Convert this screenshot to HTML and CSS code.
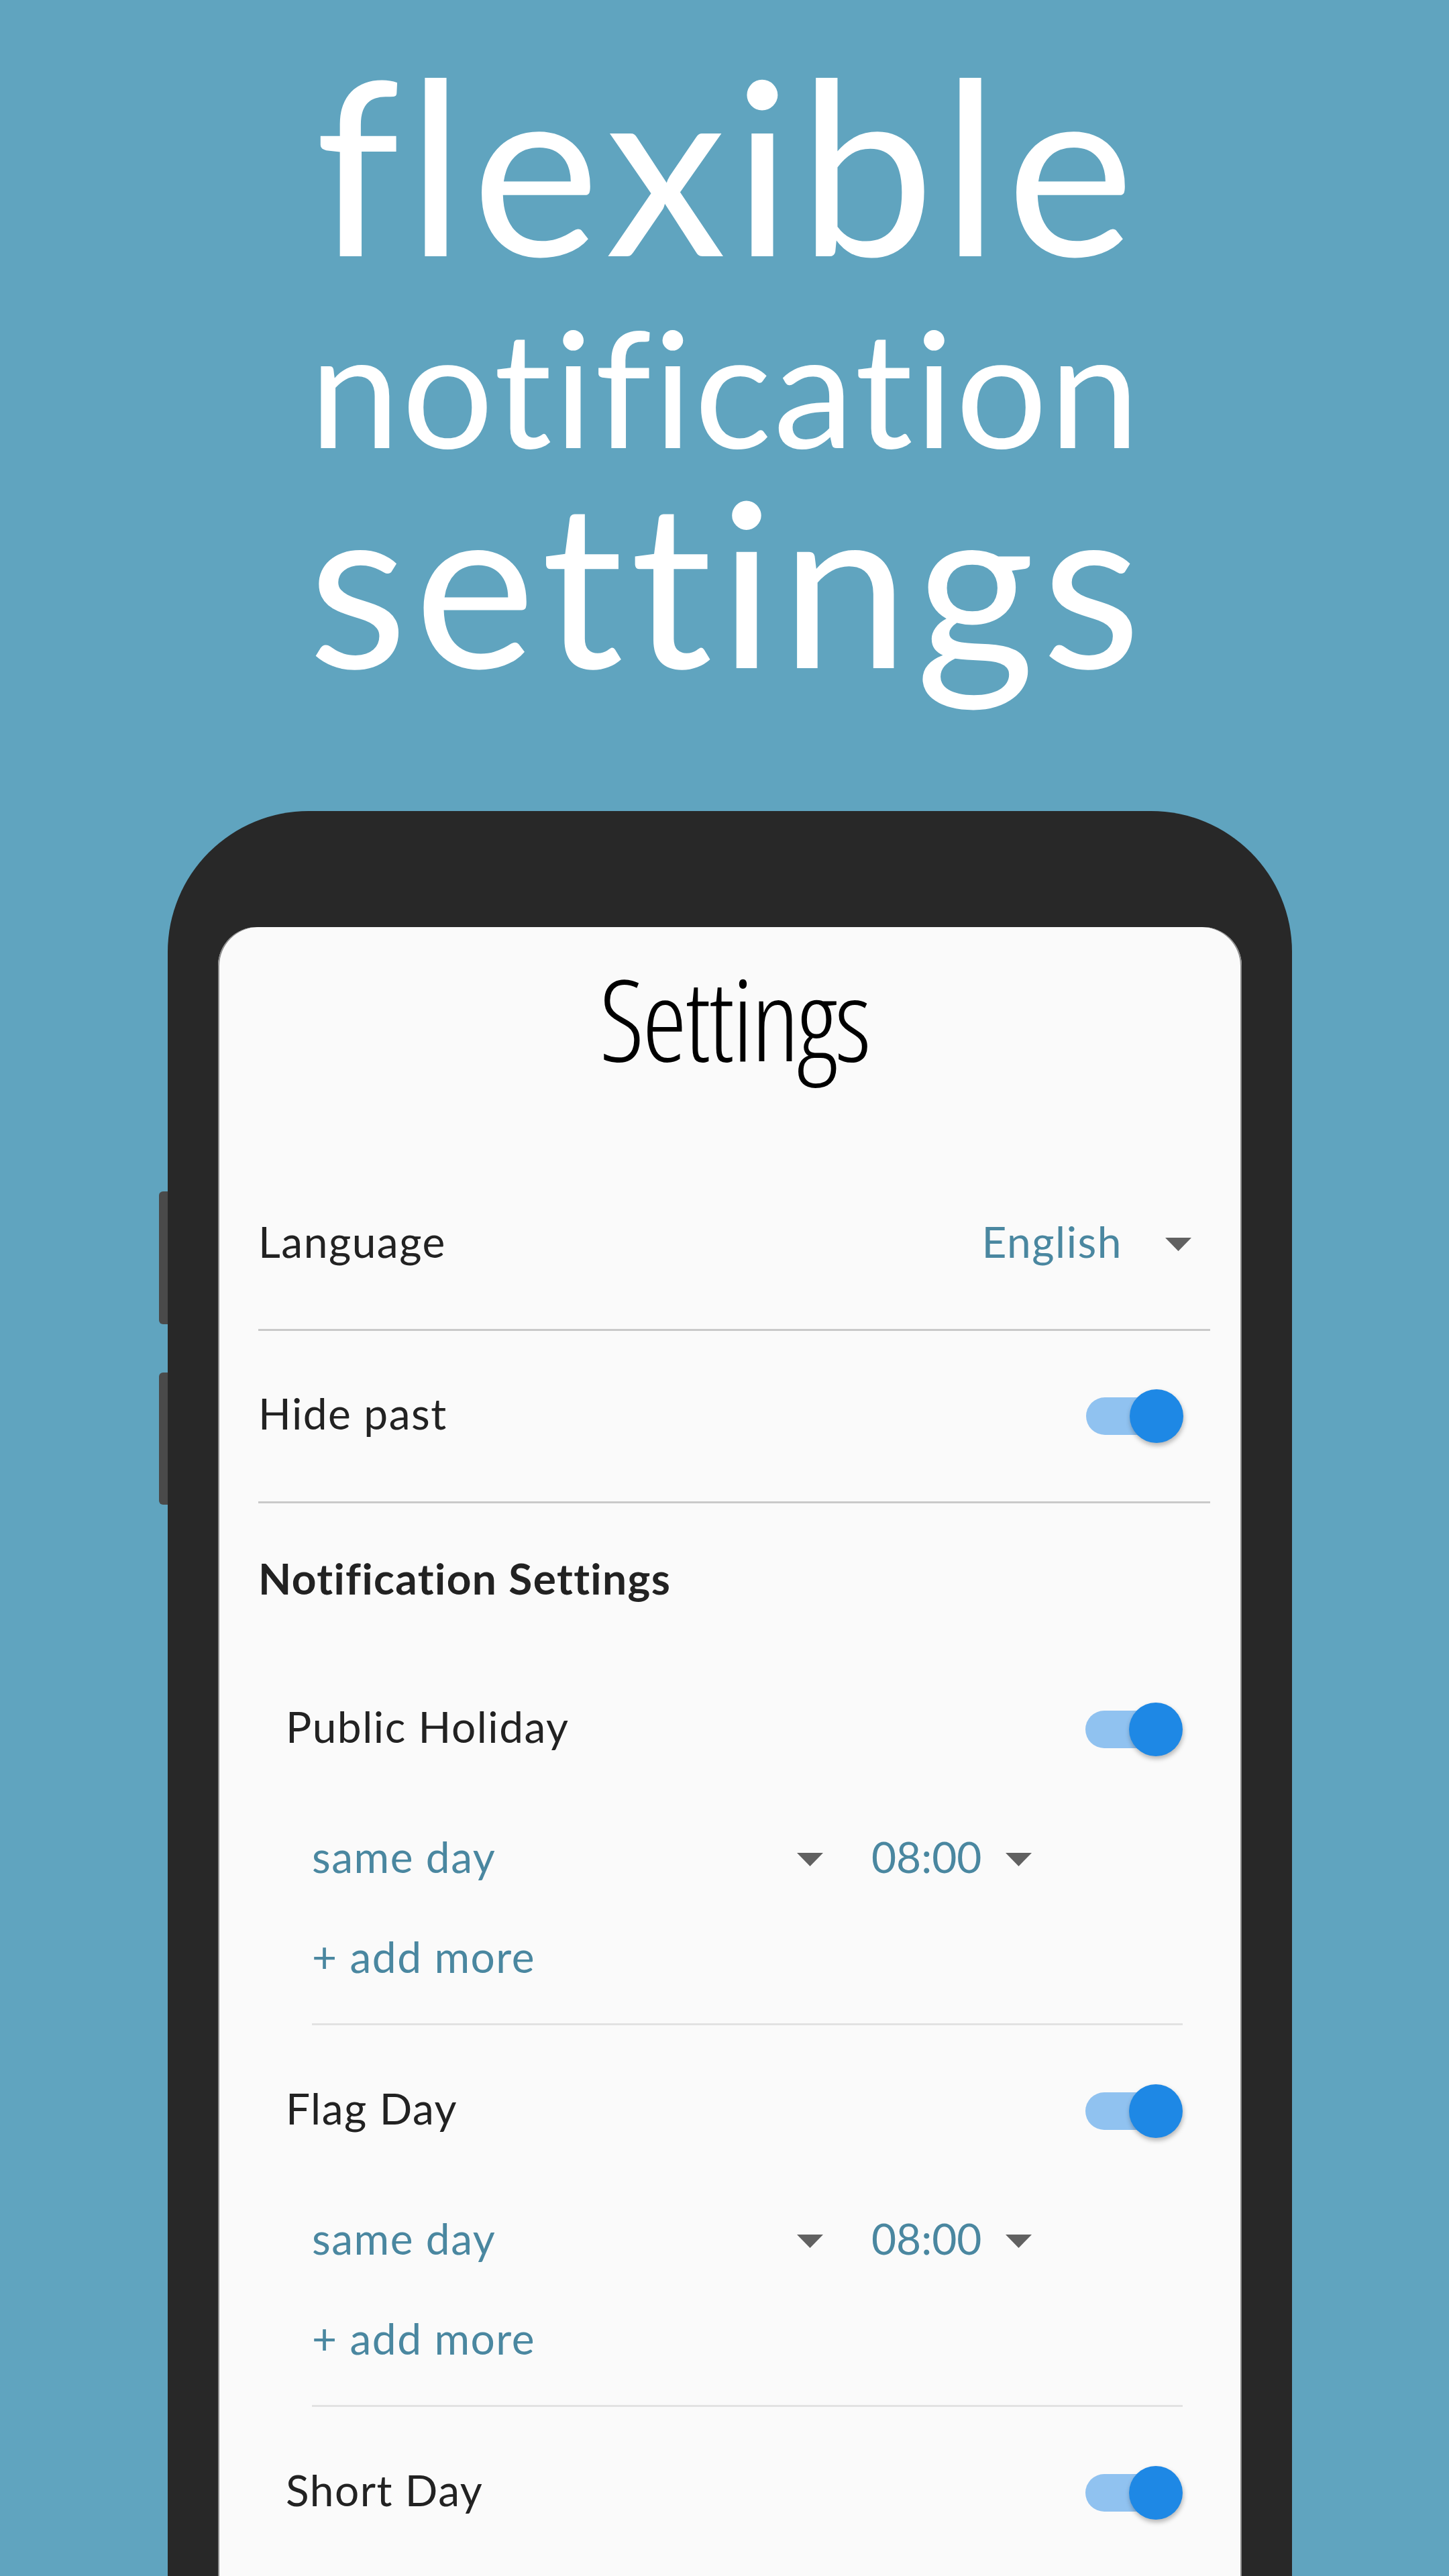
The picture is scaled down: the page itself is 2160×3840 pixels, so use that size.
FILE: index.html
```html
<!DOCTYPE html>
<html lang="en">
<head>
<meta charset="utf-8">
<title>flexible notification settings</title>
<link rel="stylesheet" href="styles.css">
</head>
<body>
<header class="headline">
  <div class="headline-line line-1">flexible</div>
  <div class="headline-line line-2">notification</div>
  <div class="headline-line line-3">settings</div>
</header>

<div class="phone">
  <span class="side-btn side-btn-1"></span>
  <span class="side-btn side-btn-2"></span>
  <main class="screen">
    <h1 class="screen-title">Settings</h1>
    <div class="list">
      <div class="row row-lang">
        <span class="label">Language</span>
        <span class="select">
          <span class="value">English</span>
          <svg class="caret caret-lang" width="39" height="20" viewBox="0 0 39 20"><path d="M0 0H39L19.5 20Z"/></svg>
        </span>
      </div>
      <div class="divider"></div>
      <div class="row row-hide">
        <span class="label">Hide past</span>
        <span class="switch"><span class="track"></span><span class="thumb"></span></span>
      </div>
      <div class="divider"></div>
      <div class="section-title">Notification Settings</div>

      <section class="group">
        <div class="row group-title">
          <span class="label">Public Holiday</span>
          <span class="switch"><span class="track"></span><span class="thumb"></span></span>
        </div>
        <div class="sub-row">
          <span class="dd dd-day">
            <span class="value">same day</span>
            <svg class="caret" width="39" height="20" viewBox="0 0 39 20"><path d="M0 0H39L19.5 20Z"/></svg>
          </span>
          <span class="dd dd-time">
            <span class="value value-time">08:00</span>
            <svg class="caret" width="39" height="20" viewBox="0 0 39 20"><path d="M0 0H39L19.5 20Z"/></svg>
          </span>
        </div>
        <div class="add-row"><span class="value">+ add more</span></div>
        <div class="divider divider-light"></div>
      </section>

      <section class="group">
        <div class="row group-title">
          <span class="label">Flag Day</span>
          <span class="switch"><span class="track"></span><span class="thumb"></span></span>
        </div>
        <div class="sub-row">
          <span class="dd dd-day">
            <span class="value">same day</span>
            <svg class="caret" width="39" height="20" viewBox="0 0 39 20"><path d="M0 0H39L19.5 20Z"/></svg>
          </span>
          <span class="dd dd-time">
            <span class="value value-time">08:00</span>
            <svg class="caret" width="39" height="20" viewBox="0 0 39 20"><path d="M0 0H39L19.5 20Z"/></svg>
          </span>
        </div>
        <div class="add-row"><span class="value">+ add more</span></div>
        <div class="divider divider-light"></div>
      </section>

      <section class="group">
        <div class="row group-title">
          <span class="label">Short Day</span>
          <span class="switch"><span class="track"></span><span class="thumb"></span></span>
        </div>
      </section>
    </div>
  </main>
</div>
</body>
</html>
```

FILE: styles.css
```css
html, body {
  margin: 0;
  padding: 0;
}

body {
  width: 2160px;
  height: 3840px;
  overflow: hidden;
  background: #60a4bf;
  font-family: Lato, "Noto Sans", sans-serif;
  font-variant-ligatures: none;
}

/* ---------- headline ---------- */
.headline {
  padding-top: 93px;
  text-align: center;
  color: #ffffff;
  font-family: Lato, "Noto Sans", sans-serif;
  font-weight: 400;
  font-variant-ligatures: none;
}

.headline-line {
  white-space: nowrap;
}

.line-1 {
  font-size: 361px;
  line-height: 300px;
  letter-spacing: 11px;
  padding-left: 11px;
}

.line-2 {
  font-size: 241px;
  line-height: 363px;
  letter-spacing: 3px;
  padding-left: 3px;
}

.line-3 {
  font-size: 342px;
  line-height: 215px;
  letter-spacing: 10px;
  padding-left: 10px;
}

/* ---------- phone ---------- */
.phone {
  position: relative;
  box-sizing: border-box;
  margin: 238px 0 0 250px;
  width: 1676px;
  height: 2700px;
  padding: 173px 75px 0;
  background: #282828;
  border-radius: 210px 210px 0 0;
}

.side-btn {
  position: absolute;
  left: -13px;
  width: 13px;
  background: #4a4a4a;
  border-radius: 6px 0 0 6px;
}

.side-btn-1 {
  top: 567px;
  height: 198px;
}

.side-btn-2 {
  top: 837px;
  height: 197px;
}

.screen {
  display: block;
  box-sizing: border-box;
  height: 100%;
  padding: 0 47px 0 60px;
  background: #fafafa;
  border-radius: 58px 58px 0 0;
  box-shadow: inset 2px 0 0 #8c8c8c, inset -2px 0 0 #8c8c8c;
}

.screen-title {
  margin: 0;
  padding-top: 35px;
  font-family: "Open Sans", "Liberation Sans", sans-serif;
  font-weight: 300;
  font-stretch: 75%;
  font-size: 168px;
  line-height: 200px;
  letter-spacing: -3px;
  text-align: center;
  color: #000000;
}

.list {
  padding-top: 112px;
}

.row {
  display: flex;
  align-items: center;
  justify-content: space-between;
}

.label,
.value {
  font-size: 64px;
  line-height: 64px;
  letter-spacing: 1.5px;
  padding-bottom: 8px;
  white-space: nowrap;
}

.label {
  color: #222222;
}

.value {
  color: #4a87a0;
}

.value-time {
  letter-spacing: 0;
}

.row-lang {
  height: 252px;
  padding-right: 28px;
}

.row-hide {
  height: 254px;
  padding-right: 40px;
}

.select {
  display: flex;
  align-items: center;
  gap: 64px;
}

.caret {
  display: block;
  flex: none;
  fill: #616161;
}

.divider {
  height: 3px;
  background: #c9c9c9;
}

.divider-light {
  margin: 12px 0 0 39px;
  background: #e2e2e2;
}

.section-title {
  padding: 80px 0 65px;
  font-size: 64px;
  line-height: 64px;
  letter-spacing: 1.4px;
  font-weight: 700;
  color: #222222;
}

/* ---------- switch ---------- */
.switch {
  position: relative;
  flex: none;
  width: 145px;
  height: 80px;
}

.track {
  position: absolute;
  left: 0;
  top: 12px;
  width: 136px;
  height: 56px;
  border-radius: 28px;
  background: #90c2f0;
}

.thumb {
  position: absolute;
  right: 0;
  top: 0;
  width: 80px;
  height: 80px;
  border-radius: 50%;
  background: #1e88e5;
  box-shadow: 1px 4px 7px rgba(0, 0, 0, 0.28);
}

/* ---------- groups ---------- */
.group {
  padding: 0 41px;
}

.group-title {
  height: 256px;
}

.sub-row {
  display: flex;
  align-items: center;
  height: 132px;
  padding-left: 39px;
}

.dd {
  display: flex;
  align-items: center;
}

.dd-day {
  width: 762px;
  justify-content: space-between;
}

.dd-time {
  margin-left: 72px;
  gap: 36px;
}

.add-row {
  display: flex;
  align-items: center;
  height: 166px;
  padding-left: 39px;
}
```
